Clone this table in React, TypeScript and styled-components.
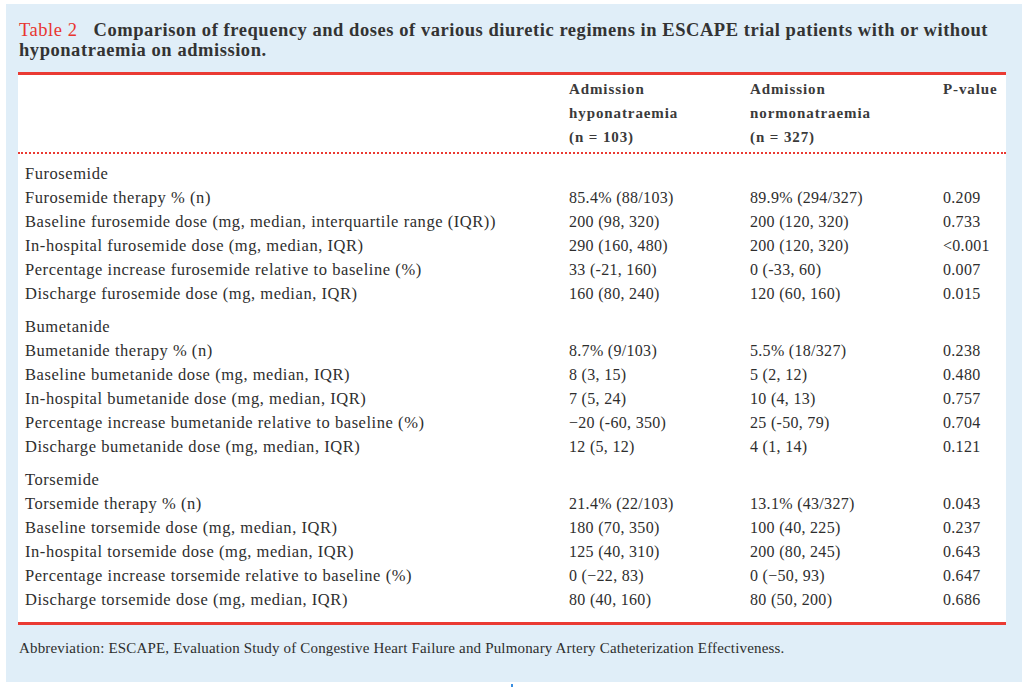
import React from "react";
import styled, { createGlobalStyle } from "styled-components";

const Global = createGlobalStyle`
  html, body { margin: 0; padding: 0; background: #ffffff; }
  body { font-family: "Liberation Serif", "Times New Roman", serif; color: #2e2e2e; }
`;

const Page = styled.div`
  width: 1024px;
  height: 688px;
  display: flex;
  flex-direction: column;
  align-items: flex-start;
`;

const Panel = styled.section`
  margin: 4px 2px 0 6px;
  width: 1016px;
  height: 678px;
  box-sizing: border-box;
  background: #e0eef8;
  padding: 16px 16px 0 12px;
  display: flex;
  flex-direction: column;
`;

const Title = styled.h2`
  margin: 0 0 12px 1px;
  font-size: 18.5px;
  line-height: 20px;
  font-weight: 700;
  color: #333333;
  letter-spacing: 0.55px;
`;

const TableLabel = styled.span`
  color: #e8352f;
  font-weight: 400;
  margin-right: 16px;
`;

const TableBox = styled.div`
  background: #ffffff;
  border-top: 3px solid #ea3a33;
  border-bottom: 3px solid #ea3a33;
  padding: 2px 0 10px 0;
`;

const Grid = styled.div`
  display: grid;
  grid-template-columns: 544px 181px 193px 1fr;
  padding-left: 7px;
`;

const Head = styled.div`
  grid-column: 1 / -1;
  display: grid;
  grid-template-columns: subgrid;
  border-bottom: 2px dotted #ea3a33;
  padding-bottom: 3px;
  margin-bottom: 8px;
  margin-left: -7px;
  padding-left: 7px;
`;

const HeadCell = styled.div`
  font-size: 15px;
  line-height: 24px;
  font-weight: 700;
  color: #3a3a3a;
  letter-spacing: 0.9px;
`;

const Label = styled.div<{ $gap?: boolean }>`
  font-size: 16.5px;
  line-height: 24px;
  letter-spacing: 0.55px;
  white-space: nowrap;
  color: #2e2e2e;
  margin-top: ${(p) => (p.$gap ? "9px" : "0")};
`;

const Value = styled.div<{ $gap?: boolean }>`
  font-size: 16px;
  line-height: 24px;
  letter-spacing: 0.3px;
  white-space: nowrap;
  color: #2e2e2e;
  margin-top: ${(p) => (p.$gap ? "9px" : "0")};
`;

const Footnote = styled.p`
  margin: 14px 0 0 1px;
  font-size: 15px;
  line-height: 18px;
  letter-spacing: 0.17px;
  color: #2e2e2e;
`;

const Dot = styled.div`
  align-self: center;
  margin-top: 2px;
  width: 2px;
  height: 3px;
  background: #3a8ee0;
`;

type Row = [string, string, string, string];
type Group = { name: string; rows: Row[] };

const groups: Group[] = [
  {
    name: "Furosemide",
    rows: [
      ["Furosemide therapy % (n)", "85.4% (88/103)", "89.9% (294/327)", "0.209"],
      ["Baseline furosemide dose (mg, median, interquartile range (IQR))", "200 (98, 320)", "200 (120, 320)", "0.733"],
      ["In-hospital furosemide dose (mg, median, IQR)", "290 (160, 480)", "200 (120, 320)", "<0.001"],
      ["Percentage increase furosemide relative to baseline (%)", "33 (-21, 160)", "0 (-33, 60)", "0.007"],
      ["Discharge furosemide dose (mg, median, IQR)", "160 (80, 240)", "120 (60, 160)", "0.015"],
    ],
  },
  {
    name: "Bumetanide",
    rows: [
      ["Bumetanide therapy % (n)", "8.7% (9/103)", "5.5% (18/327)", "0.238"],
      ["Baseline bumetanide dose (mg, median, IQR)", "8 (3, 15)", "5 (2, 12)", "0.480"],
      ["In-hospital bumetanide dose (mg, median, IQR)", "7 (5, 24)", "10 (4, 13)", "0.757"],
      ["Percentage increase bumetanide relative to baseline (%)", "\u221220 (-60, 350)", "25 (-50, 79)", "0.704"],
      ["Discharge bumetanide dose (mg, median, IQR)", "12 (5, 12)", "4 (1, 14)", "0.121"],
    ],
  },
  {
    name: "Torsemide",
    rows: [
      ["Torsemide therapy % (n)", "21.4% (22/103)", "13.1% (43/327)", "0.043"],
      ["Baseline torsemide dose (mg, median, IQR)", "180 (70, 350)", "100 (40, 225)", "0.237"],
      ["In-hospital torsemide dose (mg, median, IQR)", "125 (40, 310)", "200 (80, 245)", "0.643"],
      ["Percentage increase torsemide relative to baseline (%)", "0 (\u221222, 83)", "0 (\u221250, 93)", "0.647"],
      ["Discharge torsemide dose (mg, median, IQR)", "80 (40, 160)", "80 (50, 200)", "0.686"],
    ],
  },
];

export default function App() {
  return (
    <Page>
      <Global />
      <Panel>
        <Title>
          <TableLabel>Table 2</TableLabel>
          Comparison of frequency and doses of various diuretic regimens in ESCAPE trial patients with or without hyponatraemia on admission.
        </Title>
        <TableBox>
          <Grid>
            <Head>
              <HeadCell />
              <HeadCell>
                Admission
                <br />
                hyponatraemia
                <br />
                (n = 103)
              </HeadCell>
              <HeadCell>
                Admission
                <br />
                normonatraemia
                <br />
                (n = 327)
              </HeadCell>
              <HeadCell>P-value</HeadCell>
            </Head>
            {groups.map((g, gi) => (
              <React.Fragment key={g.name}>
                <Label $gap={gi > 0}>{g.name}</Label>
                <Value $gap={gi > 0} />
                <Value $gap={gi > 0} />
                <Value $gap={gi > 0} />
                {g.rows.map((r) => (
                  <React.Fragment key={r[0]}>
                    <Label>{r[0]}</Label>
                    <Value>{r[1]}</Value>
                    <Value>{r[2]}</Value>
                    <Value>{r[3]}</Value>
                  </React.Fragment>
                ))}
              </React.Fragment>
            ))}
          </Grid>
        </TableBox>
        <Footnote>
          Abbreviation: ESCAPE, Evaluation Study of Congestive Heart Failure and Pulmonary Artery Catheterization Effectiveness.
        </Footnote>
      </Panel>
      <Dot />
    </Page>
  );
}
